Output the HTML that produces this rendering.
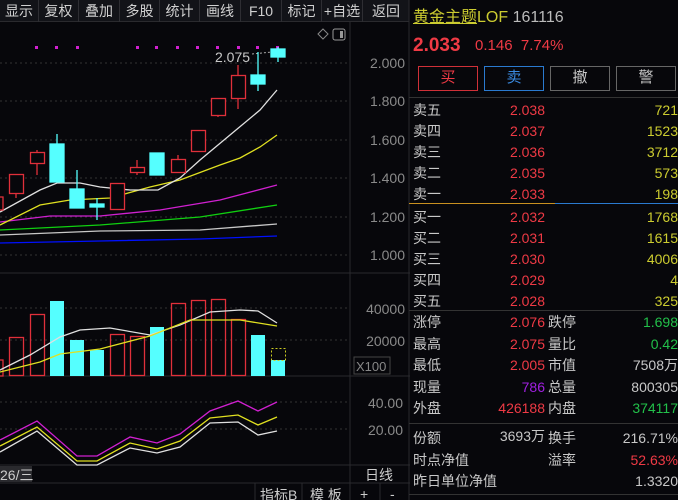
<!DOCTYPE html>
<html><head><meta charset="utf-8"><style>
*{margin:0;padding:0;box-sizing:border-box}
body{width:678px;height:500px;background:#07070b;overflow:hidden;position:relative;font-family:"Liberation Sans","Noto Sans CJK SC",sans-serif;color:#c8c8c8}
.tb{position:absolute;left:0;top:0;width:409px;height:22px;background:#121318;border-bottom:1px solid #2a2a2e;display:flex}
.tb div{height:22px;line-height:22px;font-size:14px;color:#d0d0d0;text-align:center;border-right:1px solid #2e2e33}
.a{position:absolute;font-size:14px;white-space:nowrap;line-height:16px}
.r{text-align:right}
.red{color:#ef3a45}.yel{color:#cccc30}.grn{color:#22c04a}.gry{color:#c8c8c8}
.btn{position:absolute;top:66px;height:25px;width:60px;border:1.5px solid #666;font-size:15px;text-align:center;line-height:22px}
.hl{position:absolute;left:409px;width:269px;height:1px;background:#333}
</style></head><body>
<div class="tb">
<div style="width:39px">显示</div><div style="width:40px">复权</div><div style="width:41px">叠加</div><div style="width:40px">多股</div><div style="width:40px">统计</div><div style="width:41px">画线</div><div style="width:41px">F10</div><div style="width:40px">标记</div><div style="width:41px">+自选</div><div style="width:46px;border:none">返回</div>
</div>
<svg style="position:absolute;left:0;top:0" width="410" height="500">
<g stroke="#2a2a2e" fill="none">
<line x1="350" y1="22" x2="350" y2="483"/><line x1="0" y1="273" x2="410" y2="273"/>
<line x1="0" y1="376" x2="410" y2="376"/><line x1="0" y1="465" x2="410" y2="465"/>
<line x1="0" y1="483" x2="410" y2="483"/><line x1="409" y1="0" x2="409" y2="500"/>
</g>
<g stroke="#333" stroke-dasharray="2,3">
<line x1="0" y1="63" x2="350" y2="63"/><line x1="0" y1="101" x2="350" y2="101"/><line x1="0" y1="140" x2="350" y2="140"/><line x1="0" y1="178" x2="350" y2="178"/><line x1="0" y1="217" x2="350" y2="217"/><line x1="0" y1="255" x2="350" y2="255"/>
<line x1="0" y1="308" x2="350" y2="308"/><line x1="0" y1="340" x2="350" y2="340"/>
<line x1="0" y1="402" x2="350" y2="402"/><line x1="0" y1="429" x2="350" y2="429"/>
</g>
<g font-size="14" fill="#8a8a8a" font-family="Liberation Sans">
<text x="405" y="68" text-anchor="end">2.000</text><text x="405" y="106" text-anchor="end">1.800</text><text x="405" y="145" text-anchor="end">1.600</text><text x="405" y="183" text-anchor="end">1.400</text><text x="405" y="222" text-anchor="end">1.200</text><text x="405" y="260" text-anchor="end">1.000</text>
<text x="405" y="314" text-anchor="end">40000</text><text x="405" y="346" text-anchor="end">20000</text>
<text x="403" y="408" text-anchor="end">40.00</text><text x="403" y="435" text-anchor="end">20.00</text>
</g>
<rect x="354" y="357" width="36" height="17" fill="none" stroke="#444"/><text x="356" y="371" font-size="13" fill="#888">X100</text>
<g fill="#d020d0"><rect x="35" y="46" width="3" height="3"/><rect x="55" y="46" width="3" height="3"/><rect x="76" y="46" width="3" height="3"/><rect x="136" y="46" width="3" height="3"/><rect x="155" y="46" width="3" height="3"/><rect x="176" y="46" width="3" height="3"/><rect x="196" y="46" width="3" height="3"/><rect x="216" y="46" width="3" height="3"/><rect x="237" y="46" width="3" height="3"/><rect x="256" y="46" width="3" height="3"/><rect x="276" y="46" width="3" height="3"/></g>
<path d="M318 34l5-5 5 5-5 5z" fill="none" stroke="#888"/><rect x="333" y="29" width="12" height="11" rx="2" fill="none" stroke="#999"/><rect x="340" y="31" width="3" height="7" fill="#999"/>
<text x="215" y="62" font-size="14" fill="#c8c8c8">2.075</text><line x1="252" y1="54" x2="272" y2="52" stroke="#aaa" stroke-dasharray="2,2"/>
<g fill="none" stroke-width="1.3">
<polyline stroke="#0010ff" points="0,243 100,241 200,239 277,236"/>
<polyline stroke="#c8c8c8" points="0,235 100,231 200,230 277,224"/>
<polyline stroke="#10d010" points="0,230 100,225 200,217 277,205"/>
<polyline stroke="#d020d0" points="0,222 50,216 100,216 160,210 220,200 277,185"/>
<polyline stroke="#e0e020" points="0,225 40,205 70,200 110,198 150,187 180,180 220,165 240,158 260,147 277,135"/>
<polyline stroke="#e0e0e0" points="0,212 40,190 57,183 80,183 100,187 130,190 158,190 180,178 200,160 230,135 260,110 277,90"/>
</g>
<g stroke="#e0303a" fill="#07070b" stroke-width="1.3">
<rect x="-5" y="197" width="8" height="13"/>
<line x1="16" y1="193" x2="16" y2="198"/><rect x="9.5" y="174.5" width="14" height="19"/>
<line x1="37" y1="150" x2="37" y2="175"/><rect x="30.5" y="152.5" width="14" height="11"/>
<rect x="110.5" y="183.5" width="14" height="26"/>
<line x1="137" y1="160" x2="137" y2="175"/><rect x="130.5" y="167.5" width="14" height="5"/>
<line x1="178" y1="155" x2="178" y2="160"/><rect x="171.5" y="159.5" width="14" height="13"/>
<rect x="191.5" y="130.5" width="14" height="21"/>
<line x1="218" y1="115" x2="218" y2="117"/><rect x="211.5" y="98.5" width="14" height="17"/>
<line x1="238" y1="65" x2="238" y2="109"/><rect x="231.5" y="75.5" width="14" height="23"/>
</g>
<g stroke="#5ff" fill="#5ff" stroke-width="1.3">
<line x1="57" y1="134" x2="57" y2="182"/><rect x="50" y="144" width="14" height="38"/>
<line x1="77" y1="170" x2="77" y2="208"/><rect x="70" y="189" width="14" height="19"/>
<line x1="97" y1="198" x2="97" y2="220"/><rect x="90" y="204" width="14" height="3"/>
<rect x="150" y="153" width="14" height="22"/>
<line x1="258" y1="52" x2="258" y2="91"/><rect x="251" y="75" width="14" height="9"/>
<line x1="278" y1="47" x2="278" y2="62"/><rect x="271" y="49" width="14" height="8"/>
</g>
<g stroke="#e0303a" fill="none" stroke-width="1.3">
<rect x="-5" y="360" width="8" height="16"/><rect x="9.5" y="337.5" width="14" height="38"/><rect x="30.5" y="314.5" width="14" height="61"/><rect x="110.5" y="334.5" width="14" height="41"/><rect x="130.5" y="336.5" width="14" height="39"/><rect x="171.5" y="303.5" width="14" height="72"/><rect x="191.5" y="300.5" width="14" height="75"/><rect x="211.5" y="299.5" width="14" height="76"/><rect x="231.5" y="319.5" width="14" height="56"/>
</g>
<g fill="#5ff"><rect x="50" y="301" width="14" height="75"/><rect x="70" y="340" width="14" height="36"/><rect x="90" y="350" width="14" height="26"/><rect x="150" y="327" width="14" height="49"/><rect x="251" y="335" width="14" height="41"/><rect x="271" y="360" width="14" height="16"/></g>
<rect x="271.5" y="348.5" width="14" height="12" fill="none" stroke="#cc2" stroke-dasharray="2,2"/>
<g fill="none" stroke-width="1.3">
<polyline stroke="#e0e0e0" points="0,370 30,355 60,337 80,330 110,328 150,335 180,325 210,312 240,310 258,311 277,323"/>
<polyline stroke="#e0e020" points="0,372 40,362 60,354 100,349 150,336 190,320 210,320 240,320 277,326"/>
<polyline stroke="#d020d0" points="0,440 37,421 77,456 97,456 130,437 157,443 180,434 210,411 238,401 258,411 277,402"/>
<polyline stroke="#e0e020" points="0,446 37,427 77,461 97,461 130,443 157,449 180,441 210,418 238,415 258,425 277,417"/>
<polyline stroke="#e0e0e0" points="0,452 37,431 77,465 97,465 130,448 157,453 180,447 210,423 238,422 258,435 277,431"/>
</g>
<rect x="0" y="466" width="32" height="16" fill="#2a2a2e"/><text x="0" y="480" font-size="14" fill="#ccc">26/三</text>
<text x="365" y="480" font-size="14" fill="#ccc">日线</text>
<g stroke="#2a2a2e"><line x1="255" y1="483" x2="255" y2="500"/><line x1="302" y1="483" x2="302" y2="500"/><line x1="350" y1="483" x2="350" y2="500"/><line x1="380" y1="483" x2="380" y2="500"/></g>
<text x="260" y="500" font-size="14" fill="#ccc">指标B</text><text x="310" y="500" font-size="14" fill="#ccc">模 板</text><text x="360" y="499" font-size="14" fill="#ccc">+</text><text x="390" y="499" font-size="14" fill="#ccc">-</text>
</svg>

<div class="a" style="left:413px;top:9px;font-size:16px;line-height:18px"><span class="yel" style="text-decoration:underline">黄金主题</span><span class="yel">LOF</span> <span style="color:#bbb">161116</span></div>
<div class="a red" style="left:413px;top:36px;font-size:19px;line-height:20px;font-weight:bold">2.033</div>
<div class="a red" style="left:475px;top:38px;font-size:15px">0.146&nbsp; 7.74%</div>
<div class="btn red" style="left:418px;border-color:#d03038">买</div>
<div class="btn" style="left:484px;border-color:#2a7ad0;color:#3a8ae0">卖</div>
<div class="btn gry" style="left:550px">撤</div>
<div class="btn gry" style="left:616px">警</div>
<div class="hl" style="top:97px"></div>
<div style="position:absolute;left:409px;top:203px;width:146px;height:1px;background:#c89020"></div>
<div style="position:absolute;left:555px;top:203px;width:123px;height:1px;background:#2a7ad0"></div>
<div class="hl" style="top:310px"></div><div class="hl" style="top:423px"></div><div class="hl" style="top:494px"></div>

<div class="a gry" style="left:413px;top:100px;line-height:21px">卖五<br>卖四<br>卖三<br>卖二<br>卖一</div>
<div class="a red r" style="left:480px;width:65px;top:100px;line-height:21px">2.038<br>2.037<br>2.036<br>2.035<br>2.033</div>
<div class="a yel r" style="left:600px;width:78px;top:100px;line-height:21px">721<br>1523<br>3712<br>573<br>198</div>
<div class="a gry" style="left:413px;top:207px;line-height:21px">买一<br>买二<br>买三<br>买四<br>买五</div>
<div class="a red r" style="left:480px;width:65px;top:207px;line-height:21px">2.032<br>2.031<br>2.030<br>2.029<br>2.028</div>
<div class="a yel r" style="left:600px;width:78px;top:207px;line-height:21px">1768<br>1615<br>4006<br>4<br>325</div>

<div class="a gry" style="left:413px;top:312px;line-height:21.5px">涨停<br>最高<br>最低<br>现量<br>外盘</div>
<div class="a r" style="left:470px;width:75px;top:312px;line-height:21.5px"><span class="red">2.076</span><br><span class="red">2.075</span><br><span class="red">2.005</span><br><span style="color:#a020e0">786</span><br><span class="red">426188</span></div>
<div class="a gry" style="left:548px;top:312px;line-height:21.5px">跌停<br>量比<br>市值<br>总量<br>内盘</div>
<div class="a r" style="left:590px;width:88px;top:312px;line-height:21.5px;overflow:hidden"><span class="grn">1.698</span><br><span class="grn">0.42</span><br><span class="gry">7508万</span><br><span class="gry">800305</span><br><span class="grn">374117</span></div>

<div class="a gry" style="left:413px;top:428px;line-height:21.5px">份额<br>时点净值<br>昨日单位净值</div>
<div class="a gry r" style="left:470px;width:75px;top:428px">3693万</div>
<div class="a gry" style="left:548px;top:428px;line-height:21.5px">换手<br>溢率</div>
<div class="a r" style="left:590px;width:88px;top:428px;line-height:21.5px;overflow:hidden"><span class="gry">216.71%</span><br><span class="red">52.63%</span><br><span class="gry">1.3320</span></div>
</body></html>
